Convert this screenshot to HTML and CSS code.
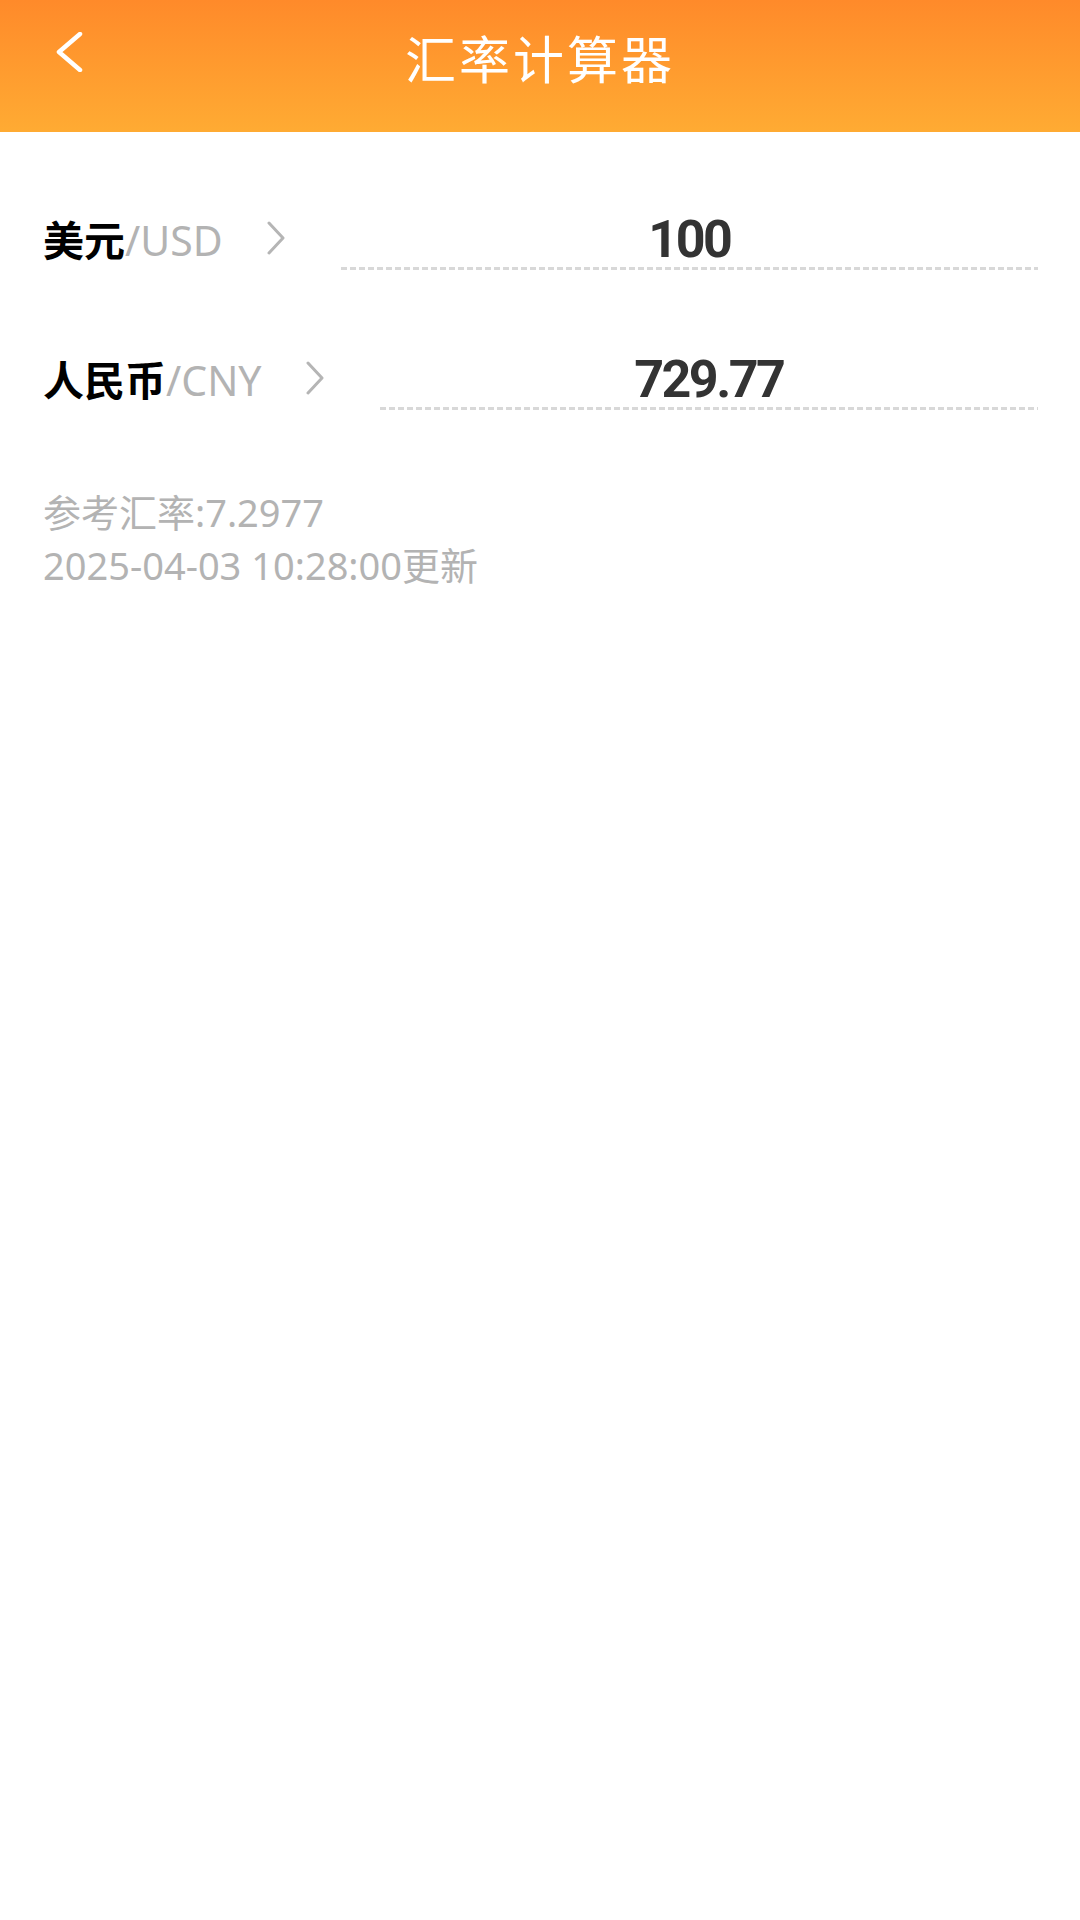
FILE: index.html
```html
<!DOCTYPE html>
<html lang="zh-CN">
<head>
  <meta charset="UTF-8">
  <title>汇率计算器</title>
  <link rel="stylesheet" href="styles.css">
</head>
<body>
  <header class="nav">
    <div class="nav-bar">
      <a class="nav-back" href="#">
        <svg width="30" height="40" viewBox="0 0 30 40">
          <polyline points="25,2 4,20 25,38" fill="none" stroke="#fff" stroke-width="4.5" stroke-linecap="round" stroke-linejoin="round"/>
        </svg>
      </a>
      <h1 class="nav-title">汇率计算器</h1>
      <span class="nav-side"></span>
    </div>
  </header>

  <main class="calc">
    <div class="rate-row">
      <div class="currency"><b>美元</b><span>/USD</span></div>
      <svg class="pick" width="20" height="34" viewBox="0 0 20 34">
        <polyline points="3,2 17,17 3,32" fill="none" stroke="#b5b5b5" stroke-width="3" stroke-linecap="round" stroke-linejoin="round"/>
      </svg>
      <div class="amount">100</div>
    </div>

    <div class="rate-row">
      <div class="currency"><b>人民币</b><span>/CNY</span></div>
      <svg class="pick" width="20" height="34" viewBox="0 0 20 34">
        <polyline points="3,2 17,17 3,32" fill="none" stroke="#b5b5b5" stroke-width="3" stroke-linecap="round" stroke-linejoin="round"/>
      </svg>
      <div class="amount">729.77</div>
    </div>

    <p class="rate-note">参考汇率:7.2977<br>2025-04-03 10:28:00更新</p>
  </main>
</body>
</html>
```

FILE: styles.css
```css
body { margin: 0; background: #fff; font-family: "Noto Sans", "Noto Sans CJK SC", sans-serif; min-height: 1920px; }

/* top bar */
.nav { height: 132px; background: linear-gradient(to bottom, #ff8a2a, #ffab33); }
.nav-bar { height: 114px; display: flex; align-items: center; }
.nav-back, .nav-side { width: 110px; flex-shrink: 0; }
.nav-back { display: flex; padding-left: 55px; box-sizing: border-box; margin-bottom: 10px; }
.nav-title { flex: 1; margin: 0; text-align: center; color: #fff; font-family: "Noto Sans CJK SC", sans-serif; font-weight: 400; font-size: 51px; letter-spacing: 3px; }

/* converter */
.calc { padding: 74px 42px 0 43px; }
.rate-row { display: flex; align-items: center; height: 64px; margin-bottom: 76px; }
.currency { font-size: 41px; white-space: nowrap; }
.currency b { color: #000; font-family: "Noto Sans CJK SC", sans-serif; font-weight: 700; }
.currency span { color: #b3b3b3; font-family: "Noto Sans", sans-serif; }
.pick { margin-left: 43px; flex-shrink: 0; }
.amount {
  flex: 1;
  margin-left: 55px;
  height: 64px;
  line-height: 68px;
  text-align: center;
  color: #333;
  font-family: Roboto, sans-serif;
  font-weight: 700;
  font-size: 52px;
  letter-spacing: -2.5px;
  background: repeating-linear-gradient(to right, #d8d8d8 0 6px, transparent 6px 9px) left bottom / 100% 3px no-repeat;
}

.rate-note { margin: 3px 0 0; color: #b3b3b3; font-size: 38px; line-height: 53px; }
```
